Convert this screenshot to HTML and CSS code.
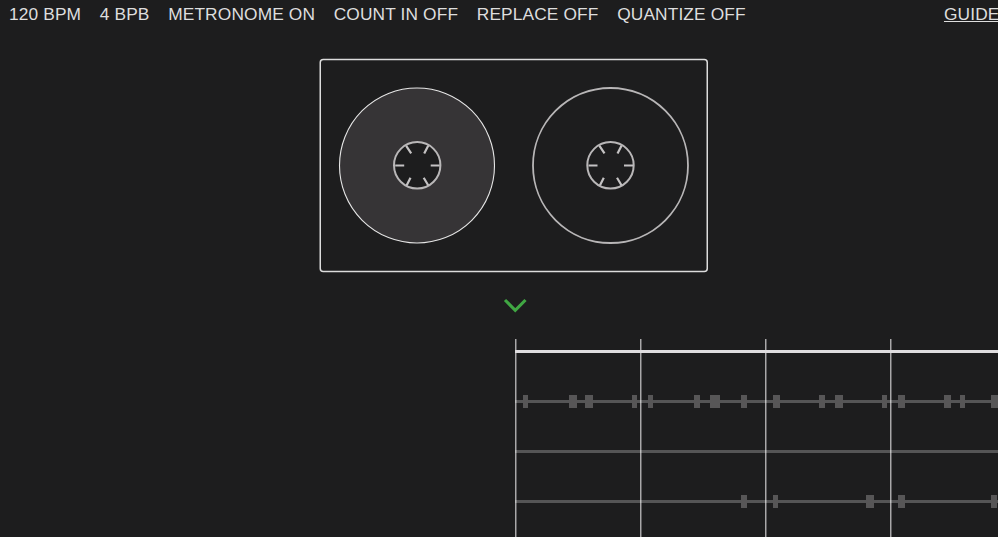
FILE: index.html
```
<!DOCTYPE html>
<html lang="en">
<head>
<meta charset="utf-8">
<title>Tape Recorder</title>
<link rel="stylesheet" href="styles.css">
</head>
<body>
<header class="bar">
  <span>120 BPM</span>
  <span>4 BPB</span>
  <span>METRONOME ON</span>
  <span>COUNT IN OFF</span>
  <span>REPLACE OFF</span>
  <span>QUANTIZE OFF</span>
  <a class="guide" href="#">GUIDE</a>
</header>
<main>
  <svg class="cassette" width="390" height="216" viewBox="319 57 390 216">
    <defs>
      <g id="hub">
        <circle r="23.2"/>
        <path class="spokes" d="M-22 .2H-13M13.500 .2H22.500M-11 -19.500L-6 -12M11 -19.500L7 -11.700M-10.500 20L-6.700 12.500M11 20L6.500 12.500"/>
      </g>
    </defs>
    <rect class="shell" x="320.25" y="59.500" width="387" height="212" rx="3"/>
    <circle class="reel wound" cx="417" cy="165.500" r="77.500"/>
    <circle class="reel" cx="610.500" cy="165.500" r="77.500"/>
    <use class="hub" href="#hub" x="417.200" y="165.300"/>
    <use class="hub" href="#hub" x="610.500" y="165.300"/>
  </svg>
  <svg class="playhead" width="24" height="16" viewBox="503 297 24 16">
    <path d="M505 300L515.250 310.250L525.500 300"/>
  </svg>
  <svg class="timeline" width="483" height="198" viewBox="515 339 483 198" shape-rendering="crispEdges">
    <path class="grid" d="M515.500 339V537M640.500 339V537M765.500 339V537M890.500 339V537"/>
    <path class="grid-edge" d="M516.500 339V537M641.500 339V537M766.500 339V537M891.500 339V537"/>
    <path class="selected" d="M515 351.500H998"/>
    <path class="track" d="M515 401.500H998M515 451.500H998M515 501.500H998"/>
    <path class="notes" d="M523 395h5v13h-5zM569 395h8v13h-8zM585 395h8v13h-8zM632 395h5v13h-5zM648 395h5v13h-5zM694 395h6v13h-6zM710 395h10v13h-10zM741 395h6v13h-6zM773 395h7v13h-7zM819 395h6v13h-6zM835 395h8v13h-8zM882 395h5v13h-5zM898 395h7v13h-7zM944 395h7v13h-7zM960 395h5v13h-5zM991 395h7v13h-7z"/>
    <path class="notes" d="M741 495h6v13h-6zM773 495h5v13h-5zM866 495h8v13h-8zM898 495h7v13h-7zM991 495h6v13h-6z"/>
  </svg>
</main>
</body>
</html>
```
FILE: styles.css
```
body {
  margin: 0;
  height: 537px;
  overflow: hidden;
  background: #1d1d1e;
  color: #dedede;
  font: 17.33px/20px "Liberation Sans", Arial, sans-serif;
  letter-spacing: 0.13px;
}
.bar {
  display: flex;
  gap: 18.6px;
  height: 24px;
  padding: 4px 0 0 9px;
  box-sizing: border-box;
  white-space: nowrap;
}
.guide {
  margin-left: auto;
  margin-right: -1.5px;
  color: inherit;
}
main {
  display: flex;
  flex-direction: column;
  padding-top: 33px;
}
svg {
  display: block;
  fill: none;
}
.cassette { margin-left: 319px; }
.shell { stroke: #dcdcdc; stroke-width: 1.5; }
.reel { stroke: #b8b6b7; stroke-width: 1.8; }
.wound { fill: #363436; stroke: #e6e6e6; stroke-width: 1.1; }
.hub { fill: #1d1d1e; stroke: #b9b7b8; stroke-width: 2; }
.spokes { stroke: #c4c2c3; stroke-width: 2.2; }
.playhead {
  margin: 24px 0 26px 503px;
  stroke: #40a743;
  stroke-width: 3.1;
}
.timeline { margin-left: 515px; }
.grid { stroke: #a9a8a9; }
.grid-edge { stroke: #616062; }
.selected { stroke: #dfdddf; stroke-width: 3; }
.track { stroke: #fff; stroke-opacity: .25; stroke-width: 3; }
.notes { fill: #575657; }
```
